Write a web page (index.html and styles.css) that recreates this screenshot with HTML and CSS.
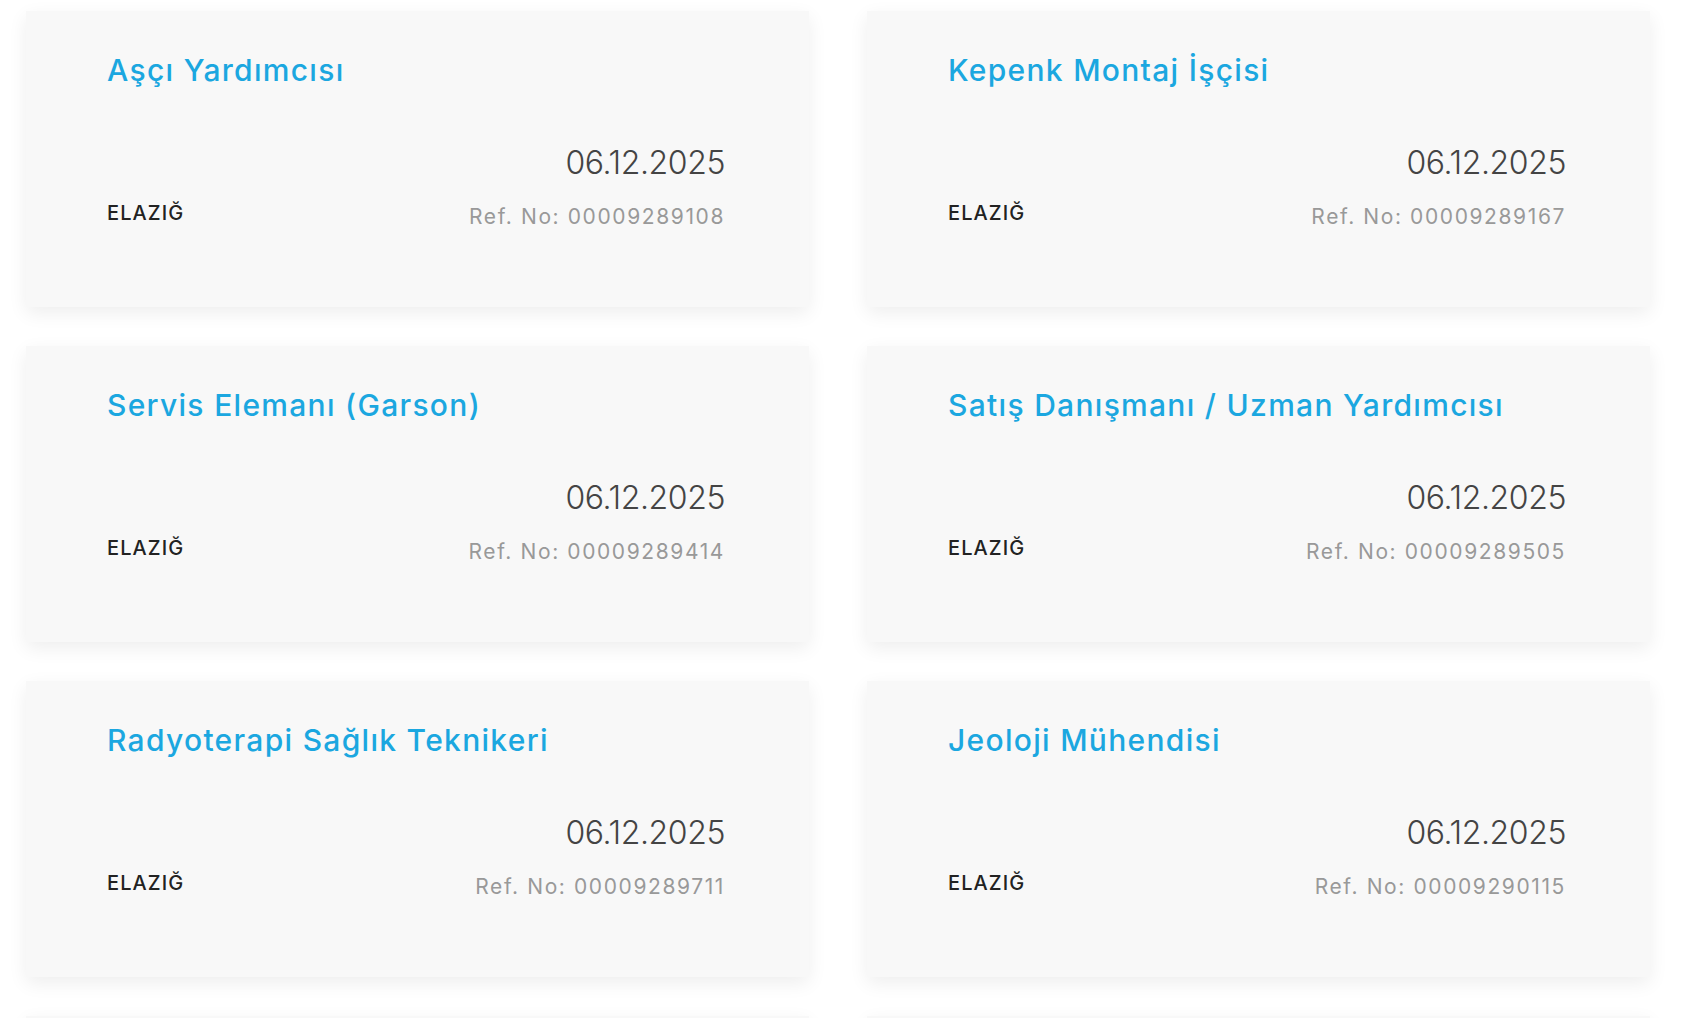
FILE: index.html
```html
<!DOCTYPE html>
<html lang="tr">
<head>
<meta charset="utf-8">
<title>İlanlar</title>
<link rel="stylesheet" href="styles.css">
</head>
<body>
<div class="grid">
  <div class="card">
    <div class="title">Aşçı Yardımcısı</div>
    <div class="meta">
      <div class="loc">ELAZIĞ</div>
      <div class="right">
        <div class="date">06.12.2025</div>
        <div class="ref">Ref. No: 00009289108</div>
      </div>
    </div>
  </div>
  <div class="card">
    <div class="title">Kepenk Montaj İşçisi</div>
    <div class="meta">
      <div class="loc">ELAZIĞ</div>
      <div class="right">
        <div class="date">06.12.2025</div>
        <div class="ref">Ref. No: 00009289167</div>
      </div>
    </div>
  </div>
  <div class="card">
    <div class="title">Servis Elemanı (Garson)</div>
    <div class="meta">
      <div class="loc">ELAZIĞ</div>
      <div class="right">
        <div class="date">06.12.2025</div>
        <div class="ref">Ref. No: 00009289414</div>
      </div>
    </div>
  </div>
  <div class="card">
    <div class="title">Satış Danışmanı / Uzman Yardımcısı</div>
    <div class="meta">
      <div class="loc">ELAZIĞ</div>
      <div class="right">
        <div class="date">06.12.2025</div>
        <div class="ref">Ref. No: 00009289505</div>
      </div>
    </div>
  </div>
  <div class="card">
    <div class="title">Radyoterapi Sağlık Teknikeri</div>
    <div class="meta">
      <div class="loc">ELAZIĞ</div>
      <div class="right">
        <div class="date">06.12.2025</div>
        <div class="ref">Ref. No: 00009289711</div>
      </div>
    </div>
  </div>
  <div class="card">
    <div class="title">Jeoloji Mühendisi</div>
    <div class="meta">
      <div class="loc">ELAZIĞ</div>
      <div class="right">
        <div class="date">06.12.2025</div>
        <div class="ref">Ref. No: 00009290115</div>
      </div>
    </div>
  </div>
  <div class="card"></div>
  <div class="card"></div>
</div>
</body>
</html>
```

FILE: styles.css
```css
html, body {
  margin: 0;
  padding: 0;
  background: #ffffff;
}
body {
  font-family: Inter, "Noto Sans", sans-serif;
}
.grid {
  display: grid;
  grid-template-columns: 783px 783px;
  grid-auto-rows: 296px;
  column-gap: 58px;
  row-gap: 39px;
  padding: 11px 0 0 26px;
  height: 1018px;
  box-sizing: border-box;
  overflow: hidden;
}
.card {
  background: #f8f8f8;
  box-shadow: 0 6px 18px rgba(0, 0, 0, 0.07);
  padding: 37px 84px 0 81px;
  box-sizing: border-box;
  display: flex;
  flex-direction: column;
}
.title {
  color: #1ba7e0;
  font-size: 30px;
  font-weight: 500;
  line-height: 45px;
  letter-spacing: 1.3px;
}
.meta {
  display: flex;
  justify-content: space-between;
  align-items: flex-end;
  margin-top: 46px;
}
.loc {
  color: #222;
  font-size: 20px;
  font-weight: 500;
  line-height: 30px;
  letter-spacing: 1.1px;
  margin-bottom: 4px;
}
.right {
  text-align: right;
}
.date {
  color: #444;
  font-size: 32px;
  font-weight: 300;
  line-height: 48px;
  letter-spacing: -0.4px;
}
.ref {
  color: #999;
  font-size: 21px;
  font-weight: 400;
  line-height: 31px;
  letter-spacing: 1.6px;
  margin-top: 14px;
}
```
